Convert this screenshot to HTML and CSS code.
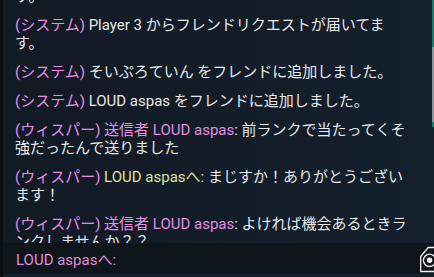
FILE: index.html
```html
<!DOCTYPE html>
<html lang="ja">

<head>
    <meta charset="UTF-8">
    <meta name="viewport" content="width=device-width, initial-scale=1.0">
    <title>Chat</title>
    <link rel="stylesheet" href="styles.css">
</head>

<body>

    <div class="chat">
        <!-- メッセージ一覧 -->
        <div class="log">
            <div class="list">
                <p class="msg"><span class="tag">(システム)</span> Player 2 からフレンドリクエストが届いてま<br>す。</p>
                <p class="msg"><span class="tag">(システム)</span> Player 3 からフレンドリクエストが届いてま<br>す。</p>
                <p class="msg"><span class="tag">(システム)</span> そいぷろていん をフレンドに追加しました。</p>
                <p class="msg"><span class="tag">(システム)</span> LOUD aspas をフレンドに追加しました。</p>
                <p class="msg"><span class="tag">(ウィスパー) 送信者 LOUD aspas</span>: 前ランクで当たってくそ<br>強だったんで送りました</p>
                <p class="msg"><span class="tag">(ウィスパー)</span> <span class="to">LOUD aspasへ</span>: まじすか！ありがとうござい<br>ます！</p>
                <p class="msg"><span class="tag">(ウィスパー) 送信者 LOUD aspas</span>: よければ機会あるときラ<br>ンクしませんか？？</p>
            </div>
            <!-- スクロールバー -->
            <div class="scrollbar"></div>
        </div>

        <!-- 入力欄 -->
        <div class="input">
            <span class="target">LOUD aspasへ:</span>
            <svg class="ping" width="14" height="27" viewBox="0 0 14 27">
                <path d="M20 1.5 H8.2 L0.7 10.5 V25.5 H20" fill="none" stroke="#f2f2f2" stroke-width="1.3" />
                <circle cx="9.6" cy="14.3" r="6.2" fill="none" stroke="#f2f2f2" stroke-width="1.3" />
                <circle cx="9.6" cy="14.3" r="2.7" fill="#f2f2f2" />
            </svg>
        </div>
    </div>

</body>

</html>
```

FILE: styles.css
```css
* {
    margin: 0;
    padding: 0;
}

body {
    background: #0a0f14;
    font-family: Roboto, "Noto Sans CJK JP", sans-serif;
    font-size: 15px;
    color: #e6e8ea;
}

.chat {
    width: 434px;
    height: 277px;
    display: flex;
    flex-direction: column;
    border-left: 3px solid #0a0f14;
    box-sizing: border-box;
    overflow: hidden;
}

.chat .log {
    height: 243px;
    display: flex;
    background: linear-gradient(90deg, #121a24, #14202c);
    overflow: hidden;
}

.chat .log .list {
    flex: 1;
    margin-top: -31px;
    padding-left: 12px;
    white-space: nowrap;
    overflow: hidden;
}

.chat .log .msg {
    line-height: 18.3px;
    margin-bottom: 10.5px;
}

.chat .log .tag {
    color: #e48de2;
}

.chat .log .to {
    color: #dde2a3;
}

.chat .log .scrollbar {
    width: 2px;
    background: linear-gradient(180deg, #1c7a68 0, #1c7a68 47px, #8b9599 47px, #8b9599 122px, #1c7a68 122px, #1c7a68 127px, transparent 127px);
}

.chat .input {
    height: 31px;
    display: flex;
    align-items: center;
    padding-left: 13px;
    background: #0e151b;
    border-bottom: 3px solid #16202a;
}

.chat .input .target {
    color: #db8fda;
    flex: 1;
}

.chat .input .ping {
    align-self: flex-end;
    margin-bottom: 1px;
}
```
